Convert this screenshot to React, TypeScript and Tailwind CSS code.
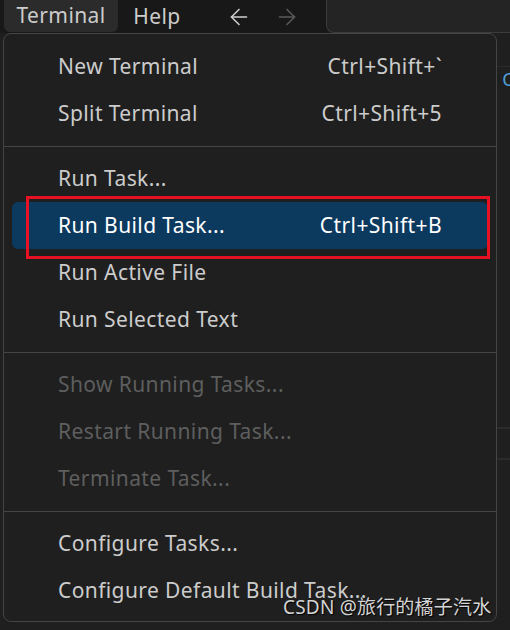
import { ArrowLeft, ArrowRight } from 'lucide-react'

type Item = { label: string; shortcut?: string; disabled?: boolean; active?: boolean }

const groups: Item[][] = [
  [
    { label: 'New Terminal', shortcut: 'Ctrl+Shift+`' },
    { label: 'Split Terminal', shortcut: 'Ctrl+Shift+5' },
  ],
  [
    { label: 'Run Task...' },
    { label: 'Run Build Task...', shortcut: 'Ctrl+Shift+B', active: true },
    { label: 'Run Active File' },
    { label: 'Run Selected Text' },
  ],
  [
    { label: 'Show Running Tasks...', disabled: true },
    { label: 'Restart Running Task...', disabled: true },
    { label: 'Terminate Task...', disabled: true },
  ],
  [
    { label: 'Configure Tasks...' },
    { label: 'Configure Default Build Task...' },
  ],
]

function MenuRow({ item }: { item: Item }) {
  const color = item.active
    ? 'text-white bg-[#0c395e]'
    : item.disabled
      ? 'text-[#5e5e5e]'
      : 'text-[#cccccc]'
  return (
    <div className={`mx-2 h-[47px] rounded-md flex items-center pl-[46px] pr-[46px] ${color}`}>
      <span className="flex-1 whitespace-nowrap">{item.label}</span>
      {item.shortcut && <span className="whitespace-nowrap">{item.shortcut}</span>}
    </div>
  )
}

export default function App() {
  return (
    <div
      className="relative w-[510px] h-[630px] overflow-hidden bg-[#1f1f1f] text-[21px] tracking-[0.4px]"
      style={{ fontFamily: '"Noto Sans", "Open Sans", sans-serif' }}
    >
      {/* Title bar */}
      <div className="h-[33px] bg-[#181818] flex items-stretch text-[#cccccc]">
        <div className="ml-1 w-[114px] h-[32px] rounded-b-md bg-[#2b2b2b] flex items-center justify-center">
          Terminal
        </div>
        <div className="w-[78px] flex items-center justify-center">Help</div>
        <div className="ml-[30px] flex items-center gap-[22px]">
          <ArrowLeft className="w-[26px] h-[26px] text-[#d0d0d0]" strokeWidth={1.4} />
          <ArrowRight className="w-[26px] h-[26px] text-[#5a5a5a]" strokeWidth={1.4} />
        </div>
        <div className="ml-auto w-[184px] h-[33px] rounded-bl-lg border-l border-b border-[#3c3c3c] bg-[#242424]" />
      </div>

      {/* Editor strip behind the menu */}
      <div className="absolute right-0 top-[66px] w-[13px] h-px bg-[#2b2b2b]" />
      <div className="absolute right-[-4px] top-[66px] text-[18px] text-[#4fa0d8]">C</div>
      <div className="absolute right-0 top-[427px] w-[13px] h-[2px] bg-[#2b2b2b]" />
      <div className="absolute right-0 top-[458px] w-[13px] h-[2px] bg-[#2b2b2b]" />

      {/* Menu */}
      <div className="absolute left-[3px] top-[33px] w-[494px] h-[589px] rounded-lg border border-[#454545] bg-[#1f1f1f] pt-[9px]">
        {groups.map((g, gi) => (
          <div key={gi}>
            {gi > 0 && <div className="mt-[9px] mb-[8px] h-px bg-[#454545]" />}
            {g.map((item) => (
              <MenuRow key={item.label} item={item} />
            ))}
          </div>
        ))}
      </div>

      {/* Annotation */}
      <div className="absolute left-[26px] top-[196px] w-[464px] h-[63px] border-[3px] border-[#e81123]" />

      {/* Watermark */}
      <div
        className="absolute left-[283px] top-[595px] text-[19px] leading-[24px] tracking-[0.2px] text-[#d4d4d4] whitespace-nowrap"
        style={{ fontFamily: '"Noto Sans", "Noto Sans CJK SC", sans-serif', textShadow: '1px 1px 1px #000' }}
      >
        CSDN @旅行的橘子汽水
      </div>
    </div>
  )
}
